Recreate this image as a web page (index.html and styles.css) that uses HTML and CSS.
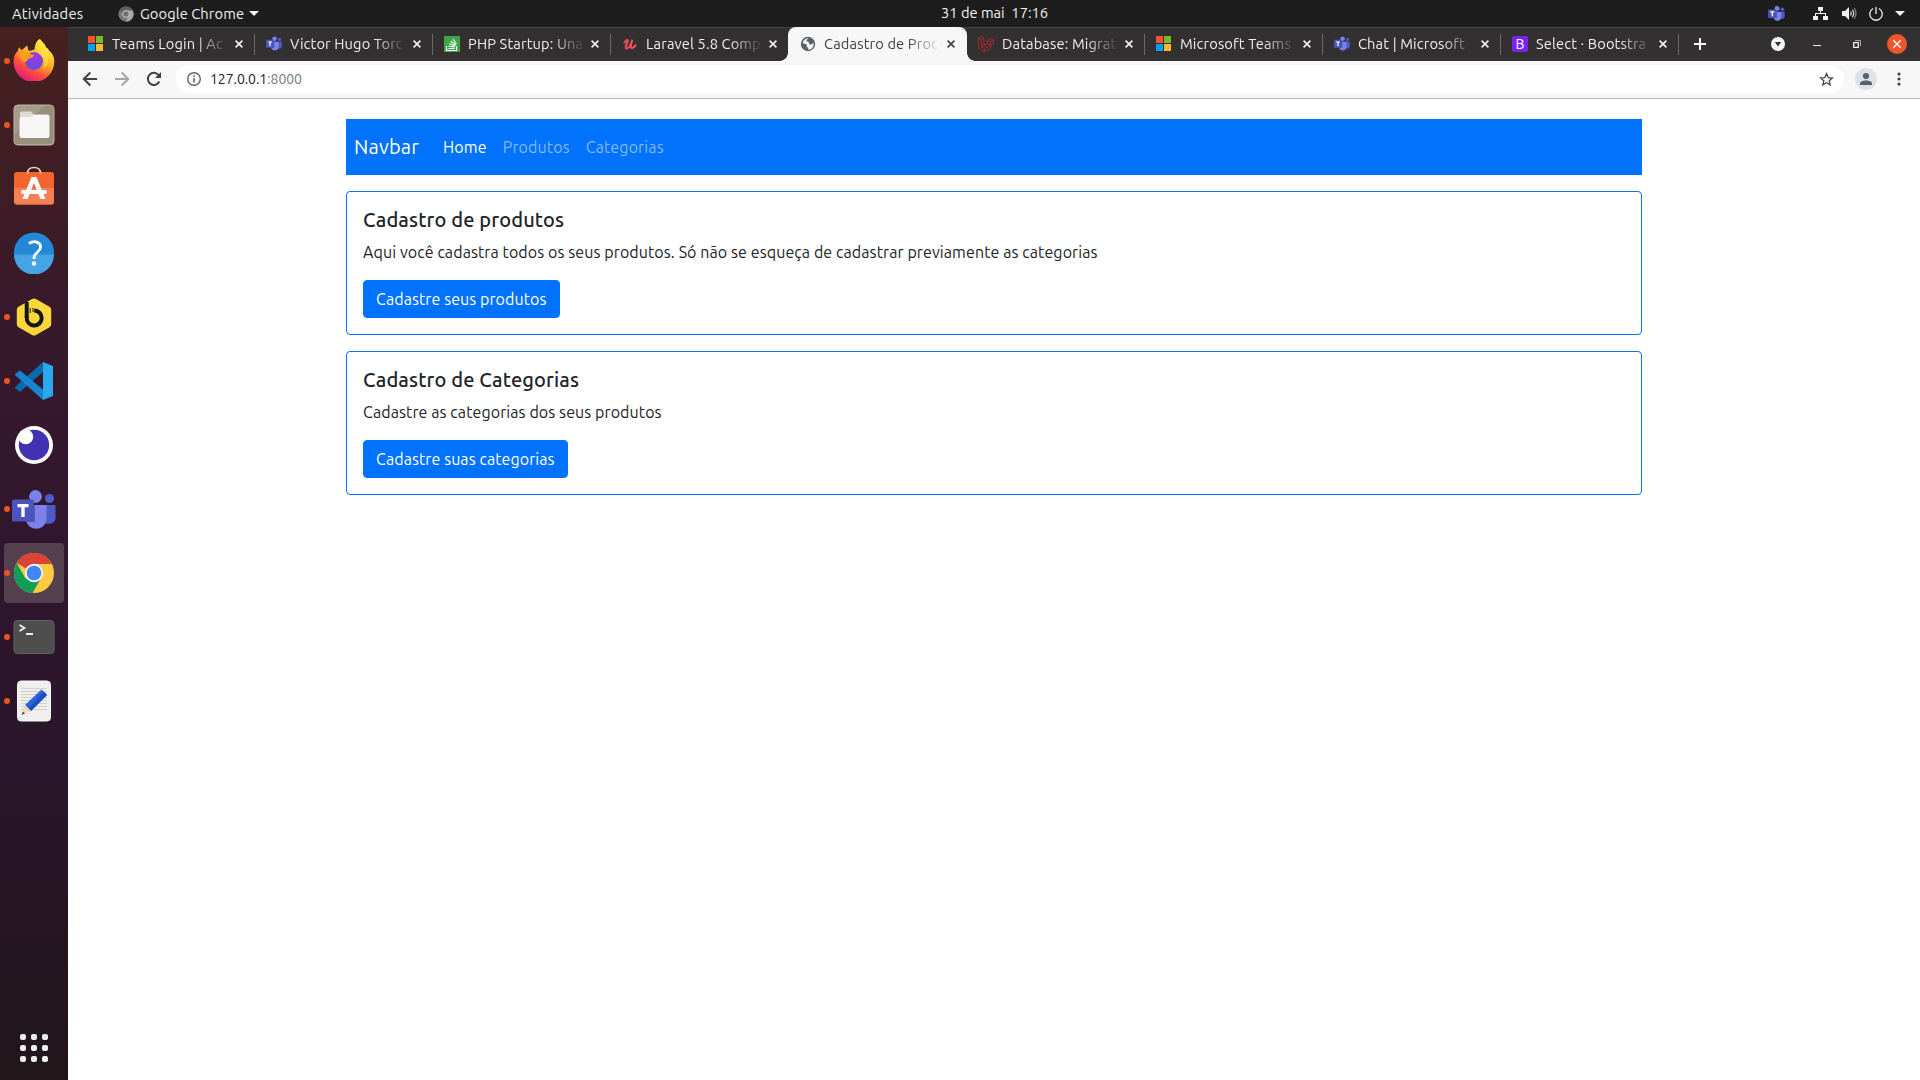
FILE: index.html
```html
<!DOCTYPE html>
<html lang="pt-BR">
<head>
<meta charset="utf-8">
<title>Cadastro de Produtos</title>
<link rel="stylesheet" href="styles.css">
</head>
<body>
<svg class="defs" width="0" height="0">
  <symbol id="teams" viewBox="0 0 44 42">
    <circle cx="37.500" cy="8.500" r="4.600" fill="#5059c9"/>
    <path d="M31 15h12.500v12.500a6.500 6.500 0 0 1-12.500 2.500z" fill="#5059c9"/>
    <circle cx="23.500" cy="6.500" r="6.400" fill="#7b83eb"/>
    <path d="M14 15h20.500v15.500a10.500 10.500 0 0 1-20.500 0z" fill="#7b83eb"/>
    <path d="M14 15h9v17h-9z" fill="#5a60b8"/>
    <rect x="0" y="9.500" width="22" height="22" rx="1.500" fill="#4b53bc"/>
    <path d="M5.500 14h11v3.200h-3.800V27H9.300v-9.800H5.500z" fill="#fff"/>
  </symbol>
  <symbol id="ms" viewBox="0 0 15 15">
    <path fill="#ff4f2b" d="M0 0h7v7H0z"/><path fill="#7cb928" d="M8 0h7v7H8z"/><path fill="#00a2f0" d="M0 8h7v7H0z"/><path fill="#ffb931" d="M8 8h7v7H8z"/>
  </symbol>
  <symbol id="close" viewBox="0 0 8 8"><path d="M.6.6l6.800 6.800M7.400.6L.6 7.400" stroke="currentColor" stroke-width="1.700" fill="none"/></symbol>
</svg>

<header class="topbar">
  <span class="activities">Atividades</span>
  <span class="app-menu">
    <svg width="16" height="16" viewBox="0 0 16 16"><circle cx="8" cy="8" r="7.600" fill="#777"/><path d="M8 8L1.400 4.200A7.600 7.600 0 0 1 14.700 4.500H8z" fill="#5f5f5f"/><path d="M8 4.500h6.700A7.600 7.600 0 0 1 7.500 15.600L11 9.800z" fill="#a5a5a5"/><circle cx="8" cy="8" r="3.800" fill="#c8c8c8"/><circle cx="8" cy="8" r="2.800" fill="#707070"/></svg>
    <span class="app-name">Google Chrome</span>
    <i class="caret"></i>
  </span>
  <span class="clock">31 de mai&nbsp; 17:16</span>
  <span class="tray">
    <svg class="tray-teams" width="17" height="16"><use href="#teams"/></svg>
    <svg class="tray-net" width="15" height="13" viewBox="0 0 15 13" fill="#f2f2f2"><path d="M5 0h5v4H5zM7 4h1v3H7zM2 6h11v3h-1V7H3v2H2zM0 9h5v4H0zM10 9h5v4h-5z"/></svg>
    <svg class="tray-vol" width="15" height="13" viewBox="0 0 15 13"><path d="M0 4h3l4-4v13L3 9H0z" fill="#f2f2f2"/><path d="M8.500 4.500q1.500 2 0 4M10.300 2.800q2.700 3.700 0 7.400" stroke="#ddd" stroke-width="1.200" fill="none"/><path d="M12.300 1.200q3.400 5.300 0 10.600" stroke="#8a8a8a" stroke-width="1.200" fill="none"/></svg>
    <svg class="tray-power" width="14" height="14" viewBox="0 0 14 14" fill="none" stroke="#eee" stroke-width="1.300"><path d="M4.200 1.500a6.200 6.200 0 1 0 5.600 0M7 0v7"/></svg>
    <i class="caret"></i>
  </span>
</header>

<div class="desktop">
  <nav class="dock">
    <div class="app running"><svg class="firefox" width="42" height="42" viewBox="0 0 42 42">
      <defs><linearGradient id="fx" x1=".8" y1=".1" x2=".3" y2="1"><stop offset="0" stop-color="#fff24a"/><stop offset=".4" stop-color="#ffae22"/><stop offset=".7" stop-color="#ff4c3e"/><stop offset="1" stop-color="#e31587"/></linearGradient><radialGradient id="fp" cx=".6" cy=".25" r=".8"><stop offset="0" stop-color="#a734e4"/><stop offset="1" stop-color="#5852dc"/></radialGradient></defs>
      <path d="M27 0c2 3 5 4.500 6.500 9 1.500-.2 2 1 2.300 2.200C39.500 14 41.500 18 41.200 23A20.300 20.300 0 0 1 .6 22.500C.5 18 2 14.500 4.800 12c.2-1.500 1-3 1.800-3.700.5 1.500 1 2.200 1.900 2.700 2.500-.8 3.500-3.500 6-4.500-.2 3 .5 4.500 2 5.500l5-1.500C22 6 23 2 27 0z" fill="url(#fx)"/>
      <circle cx="21" cy="22" r="9" fill="url(#fp)"/>
      <path d="M7 14c4-3 8-2 11 1.500l3 .5c-.5 2.500-3 3-5 3.500-2 1-1.500 3.500-4 3.500-3-1-7-4-5-9z" fill="#ff9a20"/>
      <path d="M27 0c0 5 6 8 8 14 2 7-.5 14-6 18 5-8 1-16-4.500-18 3-1 .5-8 2.500-14z" fill="#ffe441" opacity=".6"/>
    </svg></div>
    <div class="app running"><svg width="42" height="42" viewBox="0 0 42 42"><rect x="1" y="1" width="40" height="40" rx="4" fill="#a49b88" stroke="#bcb6a7"/><path d="M1.500 30L32 1.500h6q2.500 0 2.500 2.500v33q0 3-3 3h-33q-3 0-3-3z" fill="#8f8775" opacity=".6"/><path d="M7 8.500q0-1 1-1h10l3 3v5H7z" fill="#e0dbd1"/><path d="M8 13h10l3-2.500h13.500q2 0 2 2V32q0 2-2 2H8.500q-2 0-2-2V14.500z" fill="#f7f6f4"/></svg></div>
    <div class="app"><svg class="software" width="42" height="42" viewBox="0 0 42 42"><rect x="1" y="8" width="40" height="32.500" rx="3" fill="#f26430"/><path d="M1 24h40v13.500q0 3-3 3H4q-3 0-3-3z" fill="#f58055"/><path d="M14.500 9.500q0-6 6.500-6t6.500 6" fill="none" stroke="#ead2ad" stroke-width="1.700"/><path d="M18.500 13h5l9 22h-5l-6.500-16-6.500 16h-5z" fill="#fff"/><rect x="8" y="26" width="26" height="4" rx="2" fill="#fff"/></svg></div>
    <div class="app"><svg width="42" height="42" viewBox="0 0 42 42"><circle cx="21" cy="20.500" r="20" fill="#2488d8"/><path d="M1 22.500h40a20 20 0 0 1-40 0z" fill="#45a4e5"/><path d="M16 11.500c5-3.500 12-1.500 11.500 4-.3 4.500-6.500 5.500-6.500 10v1.500" fill="none" stroke="#fff" stroke-width="2.800"/><circle cx="21" cy="31.500" r="2.200" fill="#fff"/></svg></div>
    <div class="app running"><svg width="42" height="42" viewBox="0 0 42 42"><path d="M21 2.500q1 0 2 .6l13.500 7.600q1.700 1 1.700 3v14.500q0 2-1.700 3L23 39q-2 1-4 0L5.500 31.200q-1.700-1-1.700-3V13.700q0-2 1.700-3L19 3.100q1-.6 2-.6z" fill="#fad83b"/><path d="M13.700 6v15.500" stroke="#161616" stroke-width="4"/><path d="M13.700 20v1.500a7.500 7.500 0 1 0 7.500-7" fill="none" stroke="#161616" stroke-width="4"/><path d="M17.200 12v5M20 12v4" stroke="#161616" stroke-width="1"/></svg></div>
    <div class="app running"><svg width="42" height="42" viewBox="0 0 42 42"><path d="M30 2L40 6v30l-10 4z" fill="#29a8f2"/><path d="M2.500 28.500q-1-1 0-2L30 2v10L7 32z" fill="#0969ad"/><path d="M2.500 13.500q-1 1 0 2L30 40V29.500L7 10.500z" fill="#1684cf"/></svg></div>
    <div class="app"><svg width="42" height="42" viewBox="0 0 42 42"><circle cx="21" cy="21" r="19" fill="#fff"/><circle cx="21" cy="21" r="15.200" fill="#4330b3"/><circle cx="12.700" cy="12.700" r="7.500" fill="#fff"/></svg></div>
    <div class="app running"><svg class="teams" width="44" height="42"><use href="#teams"/></svg></div>
    <div class="app running active"><svg width="42" height="42" viewBox="0 0 42 42"><circle cx="21" cy="21" r="20" fill="#fdca42"/><path d="M21 21L3.700 11A20 20 0 0 1 38.800 12H21z" fill="#da4437"/><path d="M3.700 11L12.500 26.500 21 30l-1.500 11A20 20 0 0 1 3.700 11z" fill="#109d58"/><path d="M12.500 26L20 31l8-5-8.500 15-6-3z" fill="#109d58"/><circle cx="21" cy="21" r="9.200" fill="#f1f1f1"/><circle cx="21" cy="21" r="7.300" fill="#4385f5"/></svg></div>
    <div class="app running"><svg width="42" height="42" viewBox="0 0 42 42"><rect x="1" y="4.500" width="40" height="33" rx="3.500" fill="#4d4e4d" stroke="#636363"/><path d="M6.500 9l5 3-5 3M13 18h7" fill="none" stroke="#eee" stroke-width="1.800"/></svg></div>
    <div class="app running"><svg width="42" height="42" viewBox="0 0 42 42"><rect x="4.500" y="1" width="33" height="40" rx="3.500" fill="#efefee" stroke="#fafafa"/><path d="M8 8.500h26M8 11.500h26M8 14.500h26M8 17.500h26M8 20.500h26M8 23.500h26M8 26.500h26M8 29.500h26" stroke="#d0d0d0"/><path d="M28.500 9.500L34 15 18 31l-6-6z" fill="#2c62dd"/><path d="M31 11.500L34 15 18 31l-2.500-2.500z" fill="#1e4dbe"/><path d="M12 25l6 6-6 2.500-2-2z" fill="#f7d7b5"/><path d="M10 31.500l2 2L8.500 35z" fill="#444"/></svg></div>
    <div class="launcher"><i></i><i></i><i></i><i></i><i></i><i></i><i></i><i></i><i></i></div>
  </nav>

  <section class="browser">
    <div class="tabs">
      <div class="tab"><svg width="16" height="16"><use href="#ms" width="15" height="15"/></svg><span class="title">Teams Login | Ac</span><svg class="x"><use href="#close"/></svg></div>
      <div class="tab"><svg width="16" height="16"><use href="#teams"/></svg><span class="title">Victor Hugo Torc</span><svg class="x"><use href="#close"/></svg></div>
      <div class="tab"><svg width="16" height="16" viewBox="0 0 16 16"><path d="M0 0h16v16H0z" fill="#3fa447"/><path d="M2.500 10v4.500h10V10M4.500 12.500h6.200M4.600 10.200l6.200.7M5.200 7.800l5.900 2M6.700 5.300l5 3.700M9 3l3.400 5" fill="none" stroke="#fff" stroke-width="1.100"/></svg><span class="title">PHP Startup: Una</span><svg class="x"><use href="#close"/></svg></div>
      <div class="tab before-active"><svg width="16" height="16" viewBox="0 0 16 16"><path d="M2 7.500C3 5 5.500 3 5.800 4.500 6 6.500 2 12 4.500 12.500c2.500 0 4.800-5 5.800-8.700-1 4-2.500 8.200-.3 8.200 1.500 0 3-1.700 4-3.500" fill="none" stroke="#f0505a" stroke-width="2"/></svg><span class="title">Laravel 5.8 Comp</span><svg class="x"><use href="#close"/></svg></div>
      <div class="tab selected"><svg width="16" height="16" viewBox="0 0 16 16"><circle cx="8" cy="8" r="7.200" fill="#5b6066"/><path d="M8.500 2.200c-1 1.500-2.500 1.200-2 2.800.5 1.200 3-.3 3.300 1.200.3 1.300 2 .8 3.700.5v3c-1 3-3.500 4-5.500 4 1-2-.2-2.700-1.500-2.700 1.500-2.500-1-3.500-3.700-3.500 0-3 3-5.500 5.700-5.300z" fill="#f7f7f7"/><path d="M8 5.500l3.800-.8 1 3-2.800 1z" fill="#5b6066"/></svg><span class="title">Cadastro de Proc</span><svg class="x"><use href="#close"/></svg></div>
      <div class="tab"><svg width="16" height="16" viewBox="0 0 16 16" fill="none" stroke="#c12a2a" stroke-width=".8"><path d="M.5 2L3.300.5 6 2v7.500l3.500-2V4.200l3-1.700L15.500 4v3.700L12.700 9.300v3.200L6.500 15.700.5 12.300zM.5 2L3.300 3.500 6 2M3.300 3.500V11L6.500 12.600l6-3.300M9.500 4.300l3 1.600 3-1.900M12.500 6v3.300l-3-1.800L3.300 11M6.500 12.600v3"/></svg><span class="title">Database: Migrat</span><svg class="x"><use href="#close"/></svg></div>
      <div class="tab"><svg width="16" height="16"><use href="#ms" width="15" height="15"/></svg><span class="title">Microsoft Teams</span><svg class="x"><use href="#close"/></svg></div>
      <div class="tab"><svg width="16" height="16"><use href="#teams"/></svg><span class="title">Chat | Microsoft</span><svg class="x"><use href="#close"/></svg></div>
      <div class="tab"><span class="bootstrap-icon">B</span><span class="title">Select · Bootstra</span><svg class="x"><use href="#close"/></svg></div>
      <svg class="new-tab" width="12" height="12" viewBox="0 0 12 12"><path d="M6 0v12M0 6h12" stroke="#f5f5f5" stroke-width="2"/></svg>
      <div class="window-buttons">
        <svg width="14" height="14" viewBox="0 0 14 14"><circle cx="7" cy="7" r="7" fill="#f7f7f7"/><path d="M3.800 5h6.400L7 9.500z" fill="#333031"/></svg>
        <svg class="minimize" width="8" height="6" viewBox="0 0 8 6"><path d="M0 4.500h8" stroke="#eee"/></svg>
        <svg width="8" height="8" viewBox="0 0 8 8" fill="none"><path d="M.7 2.700h4.600v4.600H.7z" stroke="#eee" stroke-width="1.300"/><path d="M2 .5h5.500V6" stroke="#aaa"/></svg>
        <svg width="20" height="20" viewBox="0 0 20 20"><circle cx="10" cy="10" r="10" fill="#ef562c"/><path d="M6.300 6.300l7.400 7.400M13.700 6.300l-7.400 7.400" stroke="#fff" stroke-width="1.300"/></svg>
      </div>
    </div>

    <div class="toolbar">
      <svg width="16" height="16" viewBox="0 0 16 16" fill="none" stroke="#3c4043" stroke-width="2"><path d="M15 8H2M8.300 1.500L1.800 8l6.500 6.500"/></svg>
      <svg width="16" height="16" viewBox="0 0 16 16" fill="none" stroke="#a6a6a6" stroke-width="2"><path d="M1 8h13M7.700 1.500L14.200 8l-6.500 6.500"/></svg>
      <svg width="16" height="16" viewBox="0 0 16 16"><path d="M13.300 10.500A6 6 0 1 1 12.500 4" fill="none" stroke="#3c4043" stroke-width="2"/><path d="M15 1v6H9z" fill="#3c4043"/></svg>
      <div class="omnibox">
        <svg width="14" height="14" viewBox="0 0 14 14"><circle cx="7" cy="7" r="6.300" fill="none" stroke="#5f6368" stroke-width="1.400"/><path d="M6.200 6h1.600v4.500H6.200zM6.200 3.300h1.600v1.600H6.200z" fill="#5f6368"/></svg>
        <span class="url">127.0.0.1<em>:8000</em></span>
        <svg class="star" width="15" height="15" viewBox="0 0 15 15"><path d="M7.500 1.600l1.700 4 4.300.4-3.300 2.800 1 4.200-3.700-2.200L3.800 13l1-4.200L1.500 6l4.300-.4z" fill="none" stroke="#45494d" stroke-width="1.300"/></svg>
      </div>
      <svg width="22" height="22" viewBox="0 0 22 22"><circle cx="11" cy="11" r="11" fill="#dee1e6"/><circle cx="11" cy="8" r="3.100" fill="#566070"/><path d="M5 17v-1.500c0-4 12-4 12 0V17z" fill="#566070"/></svg>
      <svg width="4" height="14" viewBox="0 0 4 14" fill="#3c4043"><circle cx="2" cy="2" r="1.600"/><circle cx="2" cy="7" r="1.600"/><circle cx="2" cy="12" r="1.600"/></svg>
    </div>

    <main class="page">
      <div class="container">
        <nav class="navbar">
          <a class="brand">Navbar</a>
          <a class="nav-link nav-home">Home</a>
          <a class="nav-link">Produtos</a>
          <a class="nav-link">Categorias</a>
        </nav>
        <article class="card">
          <h5>Cadastro de produtos</h5>
          <p>Aqui você cadastra todos os seus produtos. Só não se esqueça de cadastrar previamente as categorias</p>
          <a class="btn">Cadastre seus produtos</a>
        </article>
        <article class="card">
          <h5>Cadastro de Categorias</h5>
          <p>Cadastre as categorias dos seus produtos</p>
          <a class="btn">Cadastre suas categorias</a>
        </article>
      </div>
    </main>
  </section>
</div>
</body>
</html>
```
FILE: styles.css
```css
* { box-sizing: border-box; }
body {
  margin: 0;
  width: 1920px;
  height: 1080px;
  overflow: hidden;
  display: flex;
  flex-direction: column;
  font-family: Ubuntu, "Noto Sans", sans-serif;
  background: #fff;
}
svg { display: block; flex: none; }
.defs { position: absolute; }

/* GNOME top bar */
.topbar {
  height: 27px;
  flex: none;
  display: flex;
  align-items: center;
  background: #1d1d1d;
  color: #f2f2f2;
  font-size: 14.667px;
  line-height: 27px;
  white-space: nowrap;
}
.activities { width: 107px; padding-left: 12px; letter-spacing: .28px; }
.app-menu { width: 834px; padding-left: 11px; display: flex; align-items: center; }
.app-name { width: 109px; margin-left: 6px; letter-spacing: .1px; }
.clock { width: 827px; line-height: 25px; padding-bottom: 2px; }
.tray { display: flex; align-items: center; }
.tray-net { margin-left: 28px; }
.tray-vol { margin-left: 14px; }
.tray-power { margin: 0 12px; }
.caret { border: 5px solid transparent; border-top-color: #f2f2f2; border-bottom: 0; }

.desktop { flex: 1; display: flex; min-height: 0; }

/* Dock */
.dock {
  width: 68px;
  flex: none;
  display: flex;
  flex-direction: column;
  align-items: center;
  gap: 4px;
  padding: 4px 0 18px;
  background: linear-gradient(#46211f, #38192b 28%, #30162e 50%, #29162a 72%, #21161a);
}
.app {
  width: 60px;
  height: 60px;
  display: flex;
  align-items: center;
  justify-content: center;
  border-radius: 4px;
  position: relative;
}
.app.active { background: #54404f; }
.app.running::before {
  content: "";
  position: absolute;
  left: 0;
  top: 27px;
  width: 6px;
  height: 6px;
  border-radius: 50%;
  background: #e95420;
}
.firefox { margin-bottom: 2px; }
.software { margin-bottom: 8px; }
.teams { margin-top: 3px; }
.launcher {
  margin-top: auto;
  display: grid;
  grid-template-columns: repeat(3, 6px);
  gap: 5px;
}
.launcher i { height: 6px; border-radius: 2px; background: #eee; }

/* Browser chrome */
.browser { flex: 1; display: flex; flex-direction: column; min-width: 0; }
.tabs {
  height: 34px;
  flex: none;
  display: flex;
  align-items: center;
  padding-left: 8px;
  background: #333031;
  box-shadow: inset 0 1px #454343;
}
.tab {
  width: 178px;
  height: 34px;
  flex: none;
  display: flex;
  align-items: center;
  padding-left: 12px;
  color: #eee;
  position: relative;
}
.tab::after {
  content: "";
  position: absolute;
  right: -1px;
  top: 7px;
  width: 1px;
  height: 21px;
  background: #6b6869;
}
.title {
  width: 115px;
  margin: 0 8px;
  overflow: hidden;
  white-space: nowrap;
  font-size: 14.667px;
  letter-spacing: .13px;
  line-height: 24px;
  -webkit-mask-image: linear-gradient(90deg, #000 84px, transparent 117px);
  mask-image: linear-gradient(90deg, #000 84px, transparent 117px);
}
.x { width: 8px; height: 8px; }
.before-active::after { display: none; }
.tab.selected {
  width: 179px;
  margin-right: -1px;
  color: #3f4246;
  background: #f7f7f7;
  border-radius: 8px 8px 0 0;
}
.selected::before, .tab.selected::after {
  content: "";
  position: absolute;
  top: auto;
  bottom: 0;
  width: 8px;
  height: 8px;
}
.selected::before { left: -8px; background: radial-gradient(circle at 0 0, transparent 7.500px, #f7f7f7 8px); }
.tab.selected::after { right: -8px; background: radial-gradient(circle at 100% 0, transparent 7.500px, #f7f7f7 8px); }
.bootstrap-icon {
  width: 16px;
  height: 16px;
  border-radius: 2px;
  background: #7a22f2;
  color: #fff;
  font-size: 14px;
  line-height: 16px;
  text-align: center;
}
.new-tab { margin-left: 16px; }
.window-buttons { margin: 0 13px 0 auto; display: flex; align-items: center; }
.window-buttons .minimize { margin: 0 32px 0 28px; }
.window-buttons svg:last-child { margin-left: 26px; }

.toolbar {
  height: 38px;
  flex: none;
  display: flex;
  align-items: center;
  gap: 16px;
  padding: 0 20px 1px 14px;
  background: #f7f7f7;
  border-bottom: 1px solid #bababa;
}
.omnibox {
  width: 1668px;
  height: 28px;
  margin: 0 -5px 0 -2px;
  padding: 0 10px 0 11px;
  display: flex;
  align-items: center;
  border-radius: 14px;
  background: #fff;
}
.toolbar > svg:last-child { margin-left: 4px; margin-right: -1px; }
.url { margin-left: 9px; font-size: 14px; letter-spacing: -.06px; color: #202124; }
.url em { font-style: normal; color: #75797d; }
.star { margin-left: auto; }

/* Page */
.page { flex: 1; padding-top: 20px; background: #fff; color: #212529; }
.container { width: 1296px; margin: 0 auto; }
.navbar {
  height: 56px;
  display: flex;
  align-items: center;
  padding: 0 8px;
  background: #0072fb;
  color: #fff;
  font-size: 16px;
  line-height: 24px;
  letter-spacing: .12px;
}
.brand { margin-right: 16px; font-size: 20px; line-height: 30px; letter-spacing: .2px; }
.nav-link { padding: 0 8px; color: #80b9fd; }
.nav-link.nav-home { color: #fff; }
.card {
  height: 144px;
  margin-top: 16px;
  padding: 16px;
  border: 1px solid #0072fb;
  border-radius: 4px;
}
.card h5 { margin: 0 0 8px; font-size: 20px; font-weight: 500; line-height: 24px; letter-spacing: .14px; }
.card p { margin: 0 0 16px; font-size: 16px; line-height: 24px; letter-spacing: .092px; }
.btn {
  display: inline-block;
  padding: 6px 12px;
  border: 1px solid #0072fb;
  border-radius: 4px;
  background: #0072fb;
  color: #fff;
  font-size: 16px;
  line-height: 24px;
  letter-spacing: .08px;
}
```
